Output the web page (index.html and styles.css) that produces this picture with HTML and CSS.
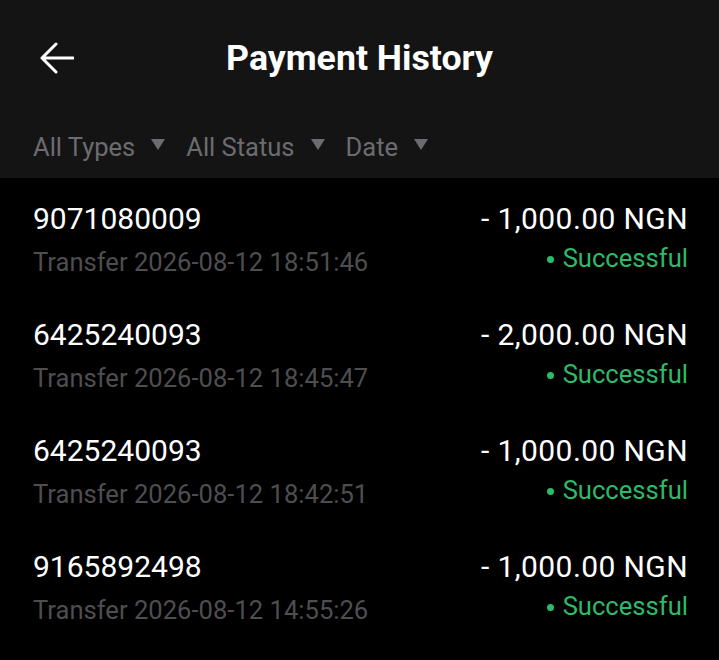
FILE: index.html
```html
<!DOCTYPE html>
<html lang="en">
<head>
  <meta charset="UTF-8" />
  <title>Payment History</title>
  <link rel="stylesheet" href="styles.css">
</head>
<body>

<!-- cabecera con titulo y filtros -->
<header class="cabecera">
  <div class="barra">
    <button class="volver" title="Back">
      <svg width="34" height="32" viewBox="0 0 34 32">
        <path d="M2 16 H33 M16 2 L2 16 L16 30" fill="none" stroke="#fff" stroke-width="3" stroke-linecap="round" stroke-linejoin="round"/>
      </svg>
    </button>
    <h1>Payment History</h1>
  </div>
  <div class="filtros">
    <span class="filtro">All Types <i class="flecha"></i></span>
    <span class="filtro">All Status <i class="flecha"></i></span>
    <span class="filtro">Date <i class="flecha"></i></span>
  </div>
</header>

<ul class="lista">
  <li class="pago">
    <div class="izq">
      <div class="cuenta">9071080009</div>
      <div class="detalle">Transfer 2026-08-12 18:51:46</div>
    </div>
    <div class="der">
      <div class="monto">- 1,000.00 NGN</div>
      <div class="estado">Successful</div>
    </div>
  </li>
  <li class="pago">
    <div class="izq">
      <div class="cuenta">6425240093</div>
      <div class="detalle">Transfer 2026-08-12 18:45:47</div>
    </div>
    <div class="der">
      <div class="monto">- 2,000.00 NGN</div>
      <div class="estado">Successful</div>
    </div>
  </li>
  <li class="pago">
    <div class="izq">
      <div class="cuenta">6425240093</div>
      <div class="detalle">Transfer 2026-08-12 18:42:51</div>
    </div>
    <div class="der">
      <div class="monto">- 1,000.00 NGN</div>
      <div class="estado">Successful</div>
    </div>
  </li>
  <li class="pago">
    <div class="izq">
      <div class="cuenta">9165892498</div>
      <div class="detalle">Transfer 2026-08-12 14:55:26</div>
    </div>
    <div class="der">
      <div class="monto">- 1,000.00 NGN</div>
      <div class="estado">Successful</div>
    </div>
  </li>
</ul>

</body>
</html>
```

FILE: styles.css
```css
body {
  margin: 0;
  background: #000;
  color: #fff;
  font-family: Roboto, "Noto Sans", sans-serif;
  height: 660px;
  overflow: hidden;
}

.cabecera {
  background: #141414;
  height: 178px;
}

.barra {
  height: 116px;
  display: flex;
  align-items: center;
  justify-content: center;
  position: relative;
}

.volver {
  position: absolute;
  left: 40px;
  top: 42px;
  background: none;
  border: none;
  padding: 0;
  width: 34px;
  height: 32px;
  cursor: pointer;
}

.volver svg {
  display: block;
}

h1 {
  margin: 0;
  font-size: 35.7px;
  font-weight: 700;
  color: #fff;
}

.filtros {
  display: flex;
  gap: 21px;
  padding: 0 33px;
  height: 62px;
  align-items: center;
}

.filtro {
  display: flex;
  align-items: center;
  gap: 16px;
  font-size: 25.5px;
  color: #6c6c70;
}

.flecha {
  width: 0;
  height: 0;
  border-left: 7.5px solid transparent;
  border-right: 7.5px solid transparent;
  border-top: 11px solid #6c6c70;
  margin-top: -5px;
}

.lista {
  list-style: none;
  margin: 0;
  padding: 0;
}

.pago {
  display: flex;
  justify-content: space-between;
  height: 116px;
  padding: 0 31px 0 33px;
}

.izq, .der {
  padding-top: 23px;
}

.der {
  text-align: right;
}

.cuenta, .monto {
  font-size: 30px;
  line-height: 36px;
  color: #fff;
}

.monto {
  letter-spacing: 0.4px;
}

.detalle {
  font-size: 25.6px;
  line-height: 32px;
  margin-top: 9px;
  color: #4e4e50;
}

.estado {
  font-size: 25.6px;
  line-height: 32px;
  margin-top: 5px;
  color: #2dba69;
}

.estado::before {
  content: "";
  display: inline-block;
  width: 7px;
  height: 7px;
  border-radius: 50%;
  background: #2dba69;
  margin-right: 9px;
  vertical-align: 4px;
}
```
